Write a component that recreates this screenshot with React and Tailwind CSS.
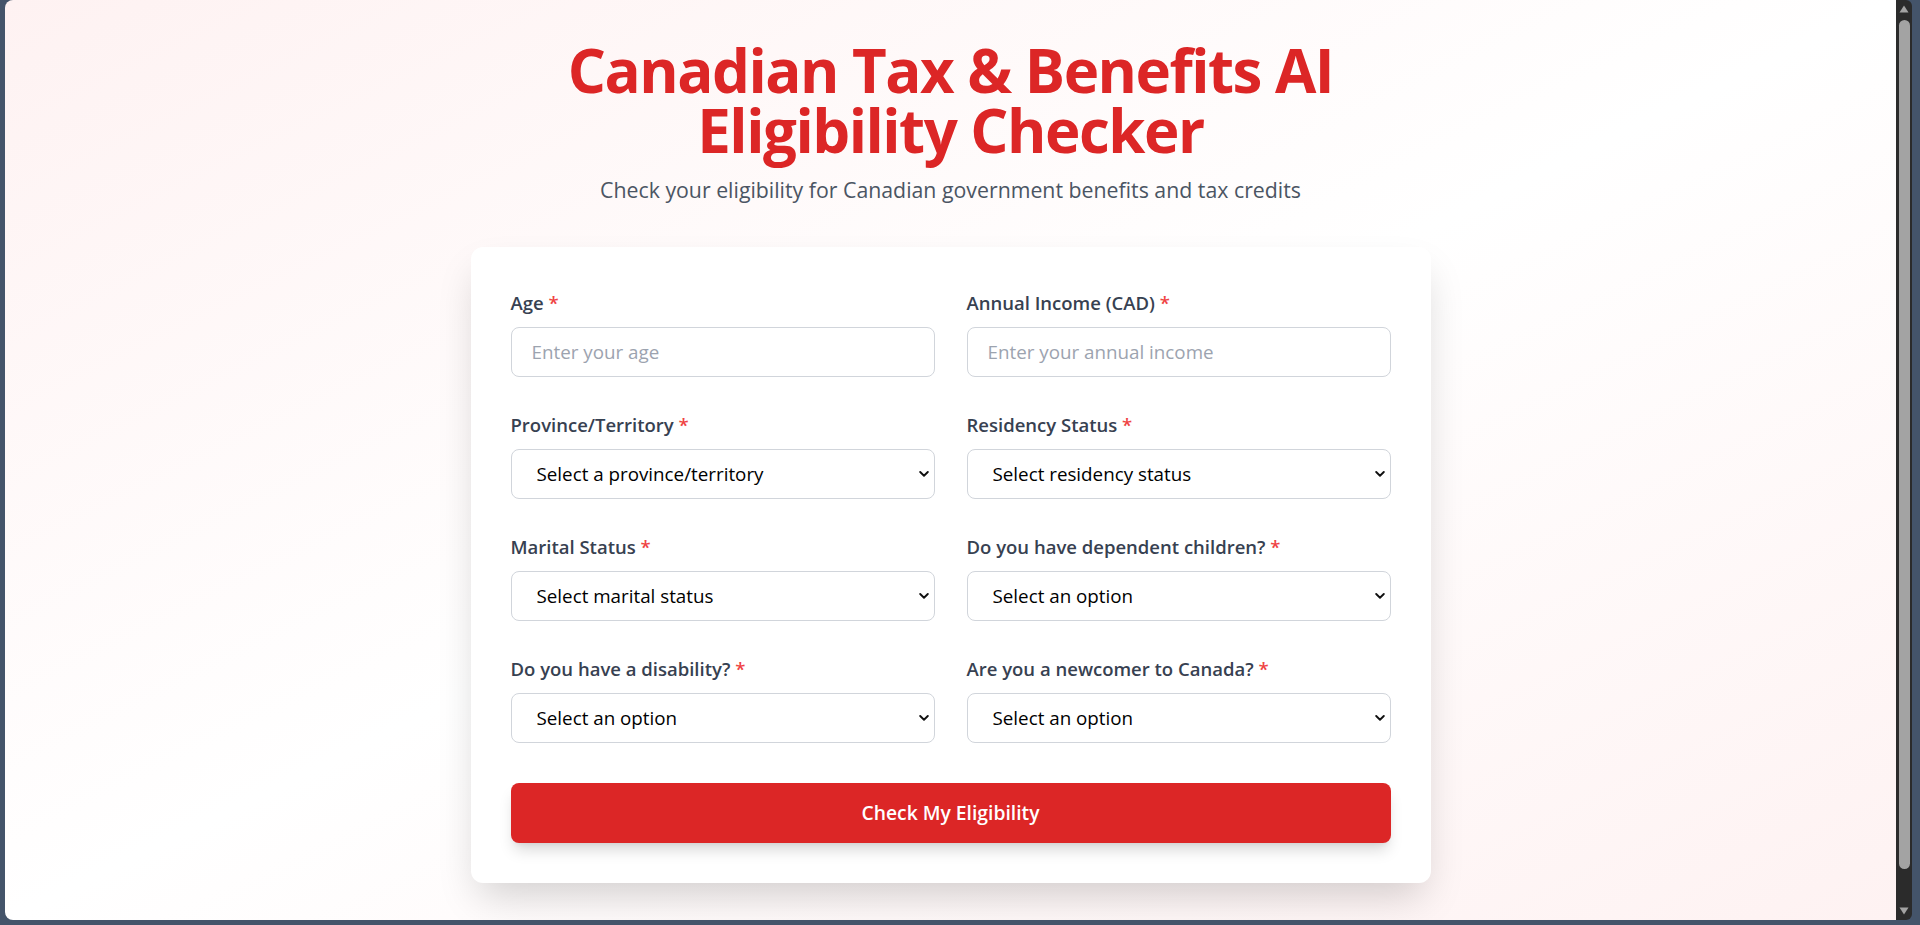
import React from "react";

const font = "font-['Open_Sans','Noto_Sans',sans-serif]";

function Label({ children }) {
  return (
    <label className="mb-[10px] block pt-[2px] text-[18.5px] leading-[28px] font-semibold text-[#374151]">
      {children} <span className="text-[#ef4444]">*</span>
    </label>
  );
}

function Chevron() {
  return (
    <svg
      className="pointer-events-none absolute right-[6px] top-1/2 -translate-y-1/2"
      width="10"
      height="7"
      viewBox="0 0 10 7"
      fill="none"
    >
      <path d="M1.2 1.5 L5 5.2 L8.8 1.5" stroke="#111" strokeWidth="1.9" strokeLinecap="round" strokeLinejoin="round" />
    </svg>
  );
}

function TextField({ label, placeholder }) {
  return (
    <div>
      <Label>{label}</Label>
      <input
        type="text"
        placeholder={placeholder}
        className="block h-[50px] w-full rounded-lg border border-[#d1d5db] bg-white px-5 text-[18.8px] text-[#111827] placeholder:text-[#9ca3af] outline-none"
      />
    </div>
  );
}

function SelectField({ label, placeholder }) {
  return (
    <div>
      <Label>{label}</Label>
      <div className="relative">
        <select
          defaultValue=""
          className="block h-[50px] w-full appearance-none rounded-lg border border-[#d1d5db] bg-white pl-[25px] pr-8 text-[18.8px] text-black outline-none"
        >
          <option value="">{placeholder}</option>
        </select>
        <Chevron />
      </div>
    </div>
  );
}

function Scrollbar() {
  return (
    <div className="flex w-[16px] flex-col items-center rounded-r-md bg-[#2b2b2b]">
      <svg width="10" height="8" viewBox="0 0 10 8" className="mt-[5px]">
        <path d="M5 0.5 L9.5 7.5 L0.5 7.5 Z" fill="#a3a3a3" />
      </svg>
      <div className="mt-[7px] w-[11px] flex-1 rounded-full bg-[#a3a3a3]" />
      <div className="h-[38px]" />
      <svg width="10" height="8" viewBox="0 0 10 8" className="mb-[5px]">
        <path d="M0.5 0.5 L9.5 0.5 L5 7.5 Z" fill="#a3a3a3" />
      </svg>
    </div>
  );
}

export default function App() {
  return (
    <div className={`flex h-[925px] w-full flex-col bg-[#44546a] ${font}`}>
      <div className="flex min-h-0 flex-1 pl-[5px] pr-[8px]">
        <div className="flex min-w-0 flex-1 flex-col items-center overflow-hidden rounded-l-lg bg-gradient-to-br from-[#fef2f2] via-white to-[#fef2f2]">
          <div className="pt-[40px] text-center">
            <h1 className="text-[60px] leading-[60px] font-bold tracking-[-0.025em] text-[#dc2626]">
              <span className="block">Canadian Tax &amp; Benefits AI</span>
              <span className="block">Eligibility Checker</span>
            </h1>
            <p className="mt-4 text-[21.3px] leading-[28px] text-[#4b5563]">
              Check your eligibility for Canadian government benefits and tax credits
            </p>
          </div>
          <div className="mt-[43px] w-[960px] rounded-xl bg-white p-10 shadow-[0_20px_40px_-8px_rgba(0,0,0,0.18)]">
            <div className="grid grid-cols-2 gap-8">
              <TextField label="Age" placeholder="Enter your age" />
              <TextField label="Annual Income (CAD)" placeholder="Enter your annual income" />
              <SelectField label="Province/Territory" placeholder="Select a province/territory" />
              <SelectField label="Residency Status" placeholder="Select residency status" />
              <SelectField label="Marital Status" placeholder="Select marital status" />
              <SelectField label="Do you have dependent children?" placeholder="Select an option" />
              <SelectField label="Do you have a disability?" placeholder="Select an option" />
              <SelectField label="Are you a newcomer to Canada?" placeholder="Select an option" />
            </div>
            <button className="mt-10 flex h-[60px] w-full items-center justify-center rounded-lg bg-[#dc2626] text-[19.3px] font-semibold text-white shadow-[0_10px_15px_-3px_rgba(0,0,0,0.15),0_4px_6px_-4px_rgba(0,0,0,0.1)]">
              Check My Eligibility
            </button>
          </div>
        </div>
        <Scrollbar />
      </div>
      <div className="h-[5px]" />
    </div>
  );
}
